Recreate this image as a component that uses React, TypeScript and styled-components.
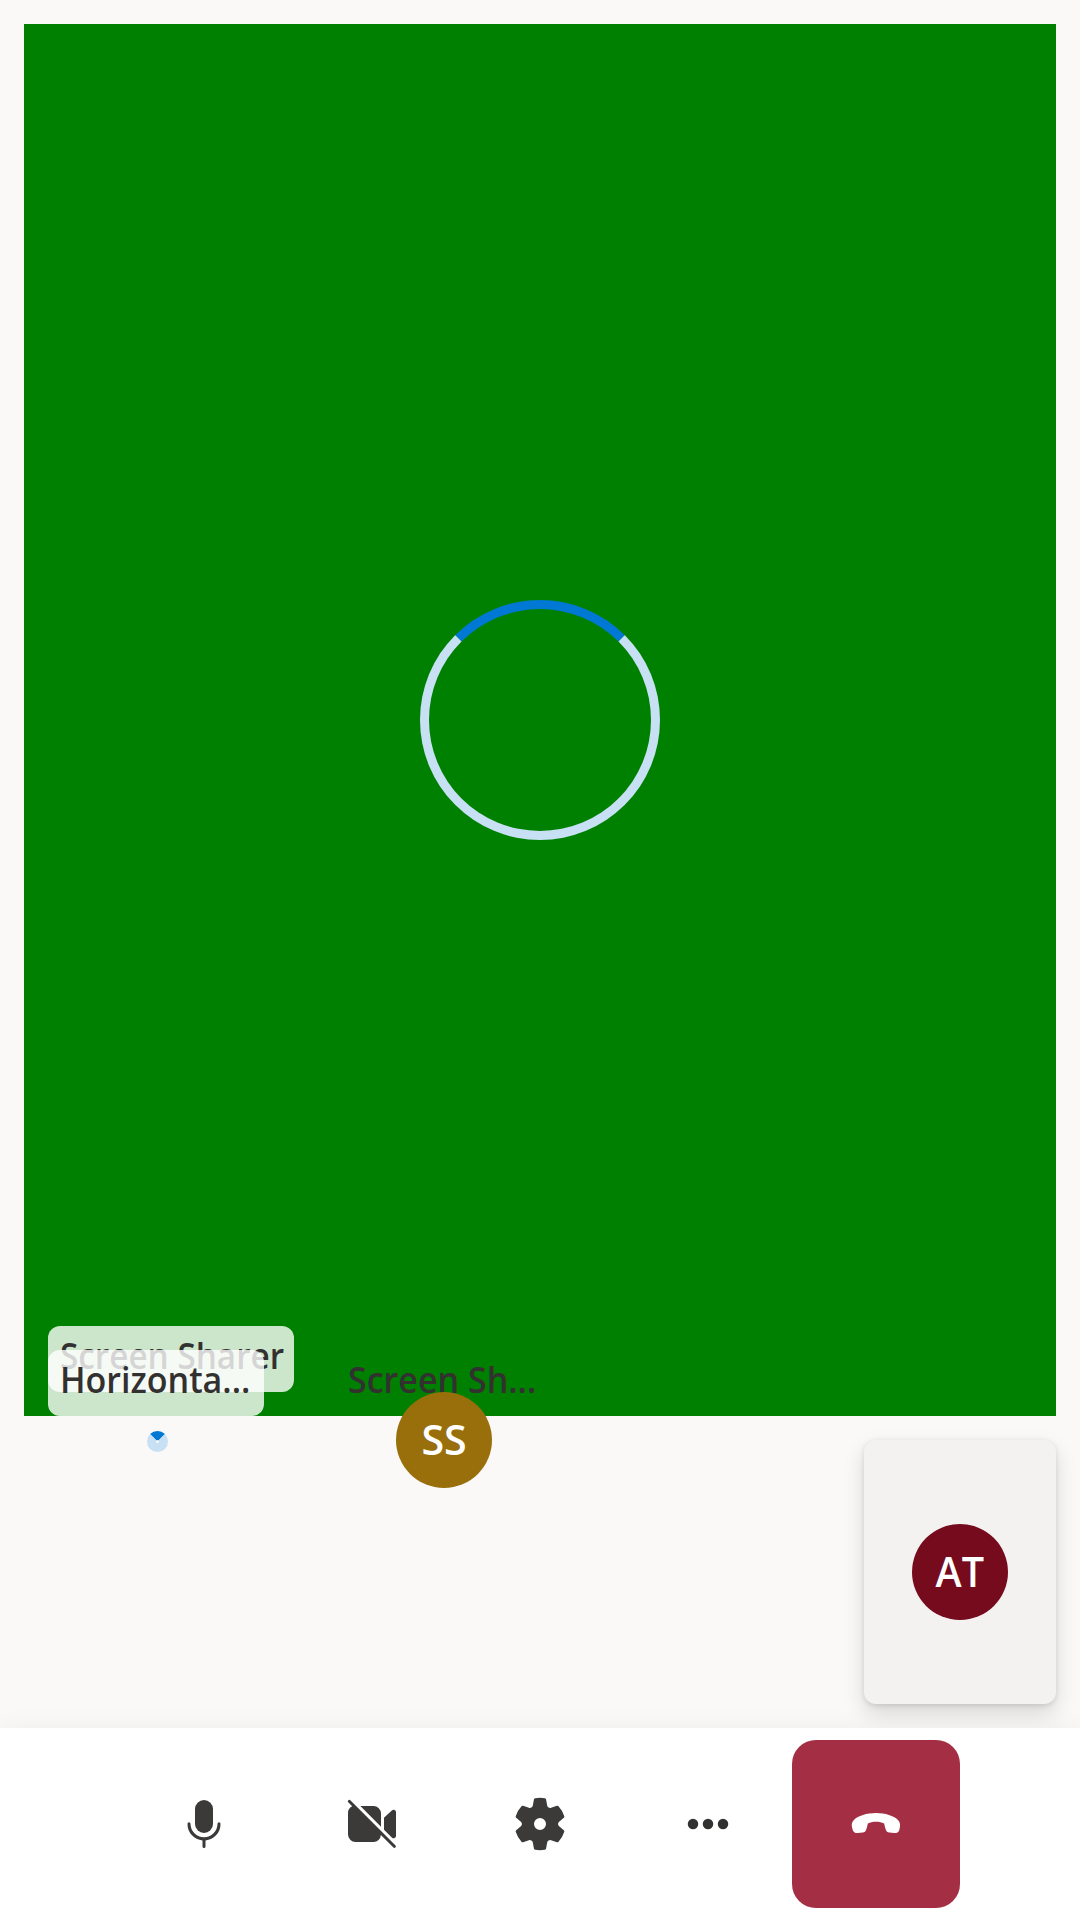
import React from "react";
import styled, { createGlobalStyle } from "styled-components";

const GlobalStyle = createGlobalStyle`
  *, *::before, *::after { box-sizing: border-box; }
  body { margin: 0; background: #faf9f8; }
`;

const Screen = styled.div`
  display: flex;
  flex-direction: column;
  width: 1080px;
  height: 1920px;
  overflow: hidden;
  background: #faf9f8;
  color: #323130;
  font-family: "Open Sans", "Noto Sans", sans-serif;
  font-weight: 600;
`;

const Gallery = styled.main`
  position: relative;
  flex: 1;
  display: flex;
  flex-direction: column;
  padding: 24px;
`;

const Stage = styled.section`
  position: relative;
  display: flex;
  align-items: center;
  justify-content: center;
  height: 1392px;
  background: #008000;
`;

const Spinner = styled.div<{ $size: number }>`
  width: ${(p) => p.$size}px;
  height: ${(p) => p.$size}px;
  border: 9px solid #c7e0f4;
  border-top-color: #0078d4;
  border-radius: 50%;
`;

const NameTag = styled.div<{ $left: number; $bottom: number; $width: number; $plain?: boolean }>`
  position: absolute;
  left: ${(p) => p.$left}px;
  bottom: ${(p) => p.$bottom}px;
  width: ${(p) => p.$width}px;
  height: 66px;
  padding: 0 12px;
  border-radius: 12px;
  background: ${(p) => (p.$plain ? "transparent" : "rgba(255, 255, 255, 0.8)")};
  line-height: 60px;
  white-space: nowrap;
`;

const TagText = styled.span<{ $stretch: number }>`
  display: inline-block;
  font-size: 36px;
  transform: scaleX(${(p) => p.$stretch});
  transform-origin: left center;
`;

const Strip = styled.div`
  position: absolute;
  left: 24px;
  top: 1392px;
  display: flex;
  gap: 24px;
`;

const StripTile = styled.div<{ $width: number; $drop: number }>`
  display: flex;
  justify-content: center;
  align-items: flex-start;
  width: ${(p) => p.$width}px;
  padding-top: ${(p) => p.$drop}px;
`;

const Avatar = styled.div<{ $color: string }>`
  display: flex;
  align-items: center;
  justify-content: center;
  width: 96px;
  height: 96px;
  padding-bottom: 2px;
  border-radius: 50%;
  background: ${(p) => p.$color};
  color: #fff;
  font-size: 42px;
  line-height: 94px;
`;

const Initials = styled.span<{ $stretch: number }>`
  transform: scaleX(${(p) => p.$stretch});
`;

const LocalTile = styled.aside`
  position: absolute;
  right: 24px;
  bottom: 24px;
  display: flex;
  align-items: center;
  justify-content: center;
  width: 192px;
  height: 264px;
  border-radius: 12px;
  background: #f3f2f1;
  box-shadow: 0 9.6px 21.6px rgba(0, 0, 0, 0.133), 0 1.8px 5.4px rgba(0, 0, 0, 0.11);
`;

const ControlBar = styled.footer`
  position: relative;
  display: flex;
  align-items: center;
  justify-content: center;
  height: 192px;
  background: #fff;
  box-shadow: 0 0 24px rgba(0, 0, 0, 0.05);
`;

const ControlButton = styled.button<{ $danger?: boolean }>`
  display: flex;
  align-items: center;
  justify-content: center;
  width: 168px;
  height: 168px;
  padding: 0;
  border: 0;
  border-radius: 24px;
  background: ${(p) => (p.$danger ? "#a42e43" : "transparent")};
  color: ${(p) => (p.$danger ? "#fff" : "#3b3a39")};
`;

const Icon = ({ children }: { children: React.ReactNode }) => (
  <svg width="60" height="60" viewBox="0 0 20 20" fill="currentColor" aria-hidden="true">
    {children}
  </svg>
);

export default function App() {
  return (
    <Screen>
      <GlobalStyle />
      <Gallery>
        <Stage>
          <Spinner $size={240} />
          <NameTag $left={24} $bottom={24} $width={246}>
            <TagText $stretch={0.925}>Screen Sharer</TagText>
          </NameTag>
          <NameTag $left={24} $bottom={0} $width={216}>
            <TagText $stretch={0.945}>Horizonta...</TagText>
          </NameTag>
          <NameTag $left={312} $bottom={0} $width={216} $plain>
            <TagText $stretch={0.945}>Screen Sh...</TagText>
          </NameTag>
        </Stage>
        <Strip>
          <StripTile $width={267} $drop={39}>
            <Spinner $size={21} />
          </StripTile>
          <StripTile $width={258} $drop={0}>
            <Avatar $color="#986f0b">
              <Initials $stretch={0.98}>SS</Initials>
            </Avatar>
          </StripTile>
        </Strip>
        <LocalTile>
          <Avatar $color="#750b1c">
            <Initials $stretch={0.94}>AT</Initials>
          </Avatar>
        </LocalTile>
      </Gallery>
      <ControlBar>
        <ControlButton aria-label="Microphone">
          <Icon>
            <path d="M10 13a3 3 0 0 0 3-3V5a3 3 0 0 0-6 0v5a3 3 0 0 0 3 3z" />
            <path d="M5.5 9.9a.5.5 0 0 0-1 0 5.5 5.5 0 0 0 5 5.58v2.02a.5.5 0 0 0 1 0v-2.02a5.5 5.5 0 0 0 5-5.58.5.5 0 0 0-1 0 4.5 4.5 0 0 1-9 0z" />
          </Icon>
        </ControlButton>
        <ControlButton aria-label="Camera">
          <Icon>
            <path d="M2.85 2.15a.5.5 0 1 0-.7.7L3.4 4.11A2.5 2.5 0 0 0 2 6.5v7A2.5 2.5 0 0 0 4.5 16h6a2.5 2.5 0 0 0 2.46-2.33l4.19 4.18a.5.5 0 0 0 .7-.7l-15-15z" />
            <path d="M13 10.88V6.5A2.5 2.5 0 0 0 10.5 4H6.12L13 10.88zM14 11.88l2.68 2.68a.8.8 0 0 0 1.32-.6V6.04a.8.8 0 0 0-1.3-.6L14 7.93v3.95z" />
          </Icon>
        </ControlButton>
        <ControlButton aria-label="Settings">
          <Icon>
            <path d="M1.91 7.38a8.5 8.5 0 0 1 1.92-3.32.5.5 0 0 1 .54-.13l1.92.68a1 1 0 0 0 1.32-.76l.36-2a.5.5 0 0 1 .4-.4 8.53 8.53 0 0 1 3.26 0 .5.5 0 0 1 .4.4l.36 2a1 1 0 0 0 1.32.76l1.92-.68a.5.5 0 0 1 .54.13 8.5 8.5 0 0 1 1.92 3.32.5.5 0 0 1-.15.54l-1.56 1.32a1 1 0 0 0 0 1.52l1.56 1.32a.5.5 0 0 1 .15.54 8.5 8.5 0 0 1-1.92 3.32.5.5 0 0 1-.54.13l-1.92-.68a1 1 0 0 0-1.32.76l-.36 2a.5.5 0 0 1-.4.4 8.53 8.53 0 0 1-3.26 0 .5.5 0 0 1-.4-.4l-.36-2a1 1 0 0 0-1.32-.76l-1.92.68a.5.5 0 0 1-.54-.13 8.5 8.5 0 0 1-1.92-3.32.5.5 0 0 1 .15-.54l1.56-1.32a1 1 0 0 0 0-1.52L2.06 7.92a.5.5 0 0 1-.15-.54zM8 10a2 2 0 1 0 4 0 2 2 0 0 0-4 0z" />
          </Icon>
        </ControlButton>
        <ControlButton aria-label="More">
          <Icon>
            <g fill="#323130">
              <circle cx="5" cy="10" r="1.75" />
              <circle cx="10" cy="10" r="1.75" />
              <circle cx="15" cy="10" r="1.75" />
            </g>
          </Icon>
        </ControlButton>
        <ControlButton $danger aria-label="Leave">
          <Icon>
            <path d="M10 6.34c3.1 0 5.95.95 7.25 2.24.75.75.88 1.6.7 2.5l-.16.83c-.16.78-.85 1.2-1.7 1.12l-1.64-.16c-.7-.07-1.1-.5-1.3-1.3l-.45-1.75c-.8-.43-1.6-.6-2.7-.6s-1.9.17-2.7.6l-.45 1.75c-.2.8-.6 1.23-1.3 1.3l-1.63.16c-.82.08-1.46-.34-1.7-1.12l-.22-.83c-.2-.9-.05-1.75.7-2.5C4 7.29 6.9 6.34 10 6.34z" />
          </Icon>
        </ControlButton>
      </ControlBar>
    </Screen>
  );
}
